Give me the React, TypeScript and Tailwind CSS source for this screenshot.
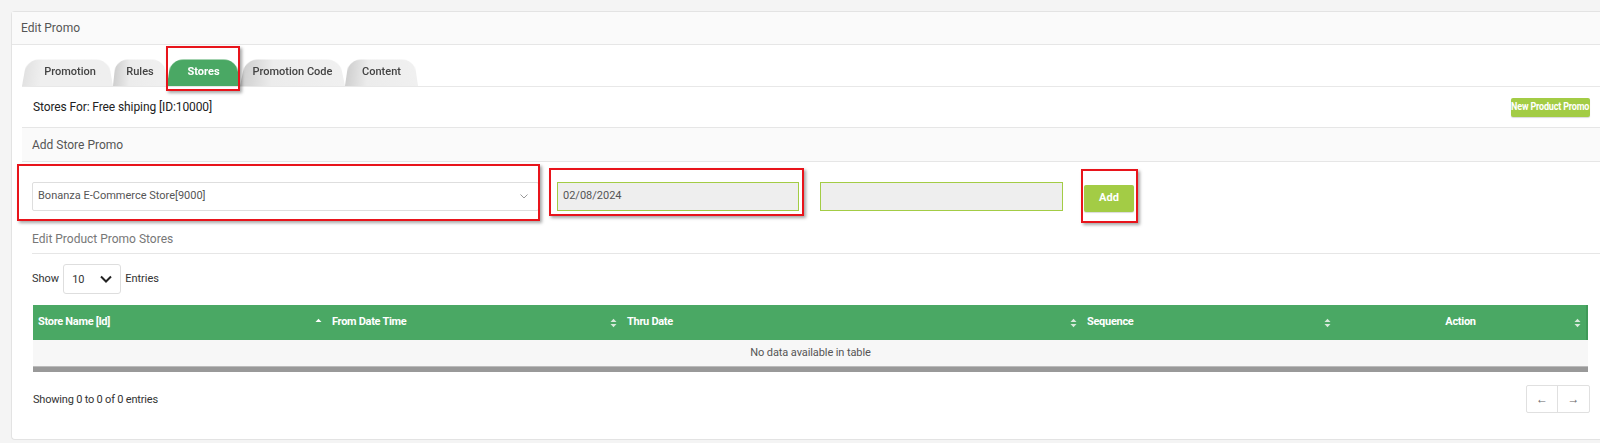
import React from "react";

const tabs = [
  { label: "Promotion", w: "w-[91px] pl-[5px]" },
  { label: "Rules", w: "w-[54px]" },
  { label: "Stores", w: "w-[73px]" },
  { label: "Promotion Code", w: "w-[105px]" },
  { label: "Content", w: "w-[73px]" },
];

const SortIcon = ({ active }: { active?: boolean }) => (
  <svg width="7" height="10" viewBox="0 0 7 10" className="shrink-0">
    <path d="M0.5 4 L3.5 0.8 L6.5 4 Z" fill={active ? "#ffffff" : "#d9e9dc"} />
    {!active && <path d="M0.5 6 L3.5 9.2 L6.5 6 Z" fill="#d9e9dc" />}
  </svg>
);

const columns = [
  { label: "Store Name [Id]", w: "w-[294px]", active: true, center: false },
  { label: "From Date Time", w: "w-[295px]", active: false, center: false },
  { label: "Thru Date", w: "w-[460px]", active: false, center: false },
  { label: "Sequence", w: "w-[254px]", active: false, center: false },
  { label: "Action", w: "flex-1", active: false, center: true },
];

export default function App() {
  return (
    <div className="h-[443px] overflow-hidden bg-[#f4f4f4] pt-[11px] font-['Roboto',sans-serif]">
      <div className="relative ml-[11px] h-[429px] bg-white border border-[#e3e3e3] border-r-0 rounded-l-[4px]">
        {/* header */}
        <div className="h-[33px] flex items-center px-[9px] bg-[#fafafa] border-b border-[#e6e6e6] text-[12px] text-[#555]">
          Edit Promo
        </div>

        <div className="pl-[10px]">
          {/* tabs */}
          <div className="mt-[11px] flex items-end h-[31px] border-b border-[#e8e8e8]">
            {tabs.map((t) => {
              const on = t.label === "Stores";
              return (
                <div
                  key={t.label}
                  className={`relative z-0 h-[30px] flex items-center justify-center text-[11px] ${t.w} ${
                    on ? "text-white font-bold" : "text-[#444] font-medium"
                  } before:content-[''] before:absolute before:inset-0 before:-z-10 before:rounded-t-[14px] before:origin-bottom before:[transform:perspective(40px)_rotateX(9deg)] ${
                    on
                      ? "before:bg-[#4aa864]"
                      : t.label === "Promotion"
                      ? "before:bg-gradient-to-r before:from-[#e2e2e2] before:via-[#efefef] before:via-20% before:to-[#efefef]"
                      : "before:bg-gradient-to-r before:from-[#cfcfcf] before:via-[#ececec] before:via-30% before:to-[#f0f0f0]"
                  }`}
                >
                  <span className="pt-[2px]">{t.label}</span>
                </div>
              );
            })}
          </div>

          {/* stores for */}
          <div className="h-[41px] flex items-center justify-between pl-[11px] pr-[10px] border-b border-[#e6e6e6]">
            <span className="text-[12px] text-[#222] tracking-[-0.1px]">Stores For: Free shiping [ID:10000]</span>
            <button className="w-[79px] h-[19px] bg-[#a3cc45] text-white text-[11.5px] font-bold rounded-[2px] shadow-[0_1px_1px_rgba(0,0,0,0.15)] flex items-center justify-center overflow-hidden">
              <span className="inline-block whitespace-nowrap scale-x-[0.78] tracking-[-0.2px]">New Product Promo</span>
            </button>
          </div>

          {/* add store promo */}
          <div className="h-[34px] flex items-center pl-[10px] bg-[#fafafa] border-b border-[#e6e6e6] text-[12px] text-[#555]">
            Add Store Promo
          </div>

          <div className="pl-[10px] pr-[10px]">
            <div className="mt-[20px] flex items-start h-[30px]">
              <div className="w-[507px] h-[29px] border border-[#dedede] rounded-[2px] flex items-center justify-between pl-[5px] pr-[10px] text-[11px] text-[#555]">
                <span>Bonanza E-Commerce Store[9000]</span>
                <svg width="8" height="5" viewBox="0 0 8 5">
                  <path d="M0.5 0.5 L4 4 L7.5 0.5" fill="none" stroke="#999" strokeWidth="1" />
                </svg>
              </div>
              <div className="ml-[18px] w-[242px] h-[29px] bg-[#eeeeee] border border-[#a3cc45] flex items-center pl-[5px] text-[11px] text-[#555]">
                02/08/2024
              </div>
              <div className="ml-[21px] w-[243px] h-[29px] bg-[#eeeeee] border border-[#a3cc45]" />
              <button className="ml-[21px] mt-[3px] w-[50px] h-[27px] bg-[#a3cc45] text-white text-[11px] font-bold rounded-[2px] shadow-[0_1px_1px_rgba(0,0,0,0.15)]">
                Add
              </button>
            </div>

            <div className="mt-[18px] h-[24px] text-[12px] text-[#777] border-b border-[#e6e6e6] -mr-[10px]">
              Edit Product Promo Stores
            </div>

            <div className="mt-[10px] flex items-center gap-[4px] text-[11px] text-[#333]">
              <span>Show</span>
              <div className="w-[58px] h-[30px] border border-[#dedede] rounded-[3px] flex items-center justify-between pl-[8px] pr-[8px]">
                <span className="pt-[3px]">10</span>
                <svg width="12" height="8" viewBox="0 0 12 8">
                  <path d="M1 1.5 L6 6.5 L11 1.5" fill="none" stroke="#222" strokeWidth="2" />
                </svg>
              </div>
              <span>Entries</span>
            </div>

            {/* table */}
            <div className="mt-[11px] ml-[1px] mr-[2px]">
              <div className="h-[35px] bg-[#4aa864] flex text-white text-[11px] font-bold tracking-[-0.3px] border-r-2 border-[#3f9a58]">
                {columns.map((c) => (
                  <div key={c.label} className={`${c.w} flex items-center pl-[5px] pr-[5px]`}>
                    <span className={c.center ? "flex-1 text-center pl-[6px]" : "flex-1"}>{c.label}</span>
                    <SortIcon active={c.active} />
                  </div>
                ))}
              </div>
              <div className="h-[26px] bg-[#f7f7f7] flex items-center justify-center text-[11px] text-[#555] tracking-[-0.1px]">
                No data available in table
              </div>
              <div className="h-[6px] bg-[#999] border-t border-[#bbb]" />
            </div>

            <div className="mt-[13px] flex items-center justify-between">
              <span className="text-[11px] text-[#333] tracking-[-0.2px] ml-[1px] mt-[2px]">Showing 0 to 0 of 0 entries</span>
              <div className="flex border border-[#e0e0e0] rounded-[2px] h-[28px]">
                <div className="w-[31px] flex items-center justify-center text-[12px] text-[#666] border-r border-[#e0e0e0]">←</div>
                <div className="w-[31px] flex items-center justify-center text-[12px] text-[#666]">→</div>
              </div>
            </div>
          </div>
        </div>

        {/* red annotation boxes */}
        <div className="absolute left-[154px] top-[34px] w-[74px] h-[45px] border-2 border-[#e8141b] shadow-[2px_2px_3px_rgba(0,0,0,0.35)]" />
        <div className="absolute left-[5px] top-[152px] w-[523px] h-[57px] border-2 border-[#e8141b] shadow-[2px_2px_3px_rgba(0,0,0,0.35)]" />
        <div className="absolute left-[537px] top-[156px] w-[255px] h-[48px] border-2 border-[#e8141b] shadow-[2px_2px_3px_rgba(0,0,0,0.35)]" />
        <div className="absolute left-[1069px] top-[157px] w-[57px] h-[54px] border-2 border-[#e8141b] shadow-[2px_2px_3px_rgba(0,0,0,0.35)]" />
      </div>
    </div>
  );
}
